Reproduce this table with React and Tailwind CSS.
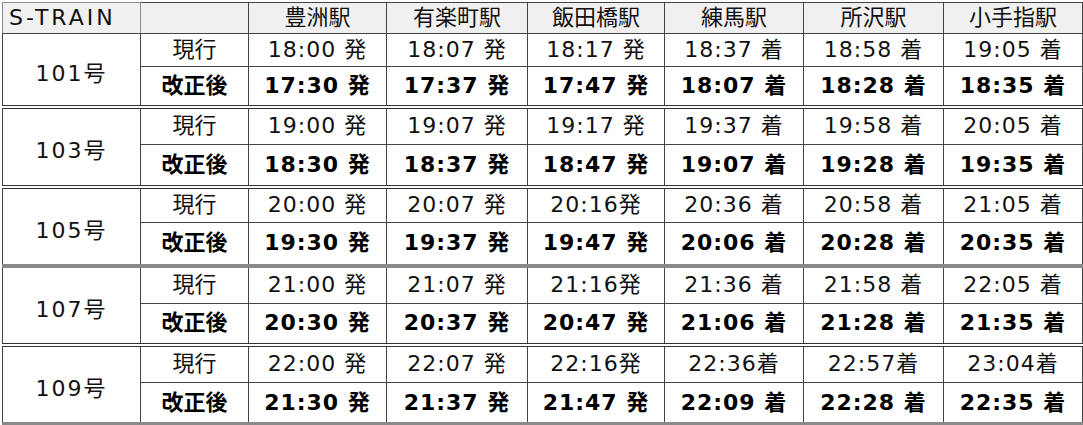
import React from 'react';

const stations = ['豊洲駅', '有楽町駅', '飯田橋駅', '練馬駅', '所沢駅', '小手指駅'];

const trains = [
  {
    no: '101号',
    now: ['18:00 発', '18:07 発', '18:17 発', '18:37 着', '18:58 着', '19:05 着'],
    next: ['17:30 発', '17:37 発', '17:47 発', '18:07 着', '18:28 着', '18:35 着'],
    sep: 'double',
    h: ['h-[33px]', 'h-[40px]'],
  },
  {
    no: '103号',
    now: ['19:00 発', '19:07 発', '19:17 発', '19:37 着', '19:58 着', '20:05 着'],
    next: ['18:30 発', '18:37 発', '18:47 発', '19:07 着', '19:28 着', '19:35 着'],
    sep: 'double',
    h: ['h-[38px]', 'h-[42px]'],
  },
  {
    no: '105号',
    now: ['20:00 発', '20:07 発', '20:16発', '20:36 着', '20:58 着', '21:05 着'],
    next: ['19:30 発', '19:37 発', '19:47 発', '20:06 着', '20:28 着', '20:35 着'],
    sep: 'gray',
    h: ['h-[36px]', 'h-[43px]'],
  },
  {
    no: '107号',
    now: ['21:00 発', '21:07 発', '21:16発', '21:36 着', '21:58 着', '22:05 着'],
    next: ['20:30 発', '20:37 発', '20:47 発', '21:06 着', '21:28 着', '21:35 着'],
    sep: 'double',
    h: ['h-[38px]', 'h-[41px]'],
  },
  {
    no: '109号',
    now: ['22:00 発', '22:07 発', '22:16発', '22:36着', '22:57着', '23:04着'],
    next: ['21:30 発', '21:37 発', '21:47 発', '22:09 着', '22:28 着', '22:35 着'],
    sep: 'bottom',
    h: ['h-[38px]', 'h-[41px]'],
  },
];

const sepClass = {
  double: 'border-b-4 border-b-[#333] border-double',
  gray: 'border-b-4 border-b-[#8a8a8a]',
  bottom: 'border-b-[3px] border-b-[#8a8a8a]',
};

const App = () => {
  return (
    <div className="w-[1083px] h-[425px] bg-white pl-[2px] pt-[2px] font-['DejaVu_Sans','Noto_Sans_CJK_JP',sans-serif] text-[#111] text-[22px]">
      <table className="table-fixed border-collapse w-[1080px] border border-[#8a8a8a]">
        <colgroup>
          <col className="w-[138px]" />
          <col className="w-[108px]" />
          <col className="w-[138px]" />
          <col className="w-[141px]" />
          <col className="w-[137px]" />
          <col className="w-[139px]" />
          <col className="w-[140px]" />
          <col className="w-[139px]" />
        </colgroup>
        <thead>
          <tr className="bg-[#f0f0f0] h-[31px]">
            <td className="border border-[#8a8a8a] pl-[6px] leading-none tracking-[3px]">S-TRAIN</td>
            <td className="border border-[#444]"></td>
            {stations.map((s) => (
              <td key={s} className="border border-[#444] text-center leading-none">{s}</td>
            ))}
          </tr>
        </thead>
        <tbody>
          {trains.map((t) => (
            <React.Fragment key={t.no}>
              <tr className={t.h[0]}>
                <td rowSpan={2} className={`border border-[#444] text-center align-middle pt-[8px] tracking-[2px] ${sepClass[t.sep]}`}>
                  {t.no}
                </td>
                <td className="border border-[#444] text-center leading-none">現行</td>
                {t.now.map((v, i) => (
                  <td key={i} className="border border-[#444] text-center leading-none tracking-[1px]">{v}</td>
                ))}
              </tr>
              <tr className={`${t.h[1]} font-bold text-black`}>
                <td className={`border border-[#444] text-center leading-none ${sepClass[t.sep]}`}>改正後</td>
                {t.next.map((v, i) => (
                  <td key={i} className={`border border-[#444] text-center leading-none tracking-[1px] ${sepClass[t.sep]}`}>{v}</td>
                ))}
              </tr>
            </React.Fragment>
          ))}
        </tbody>
      </table>
    </div>
  );
};

export default App;
